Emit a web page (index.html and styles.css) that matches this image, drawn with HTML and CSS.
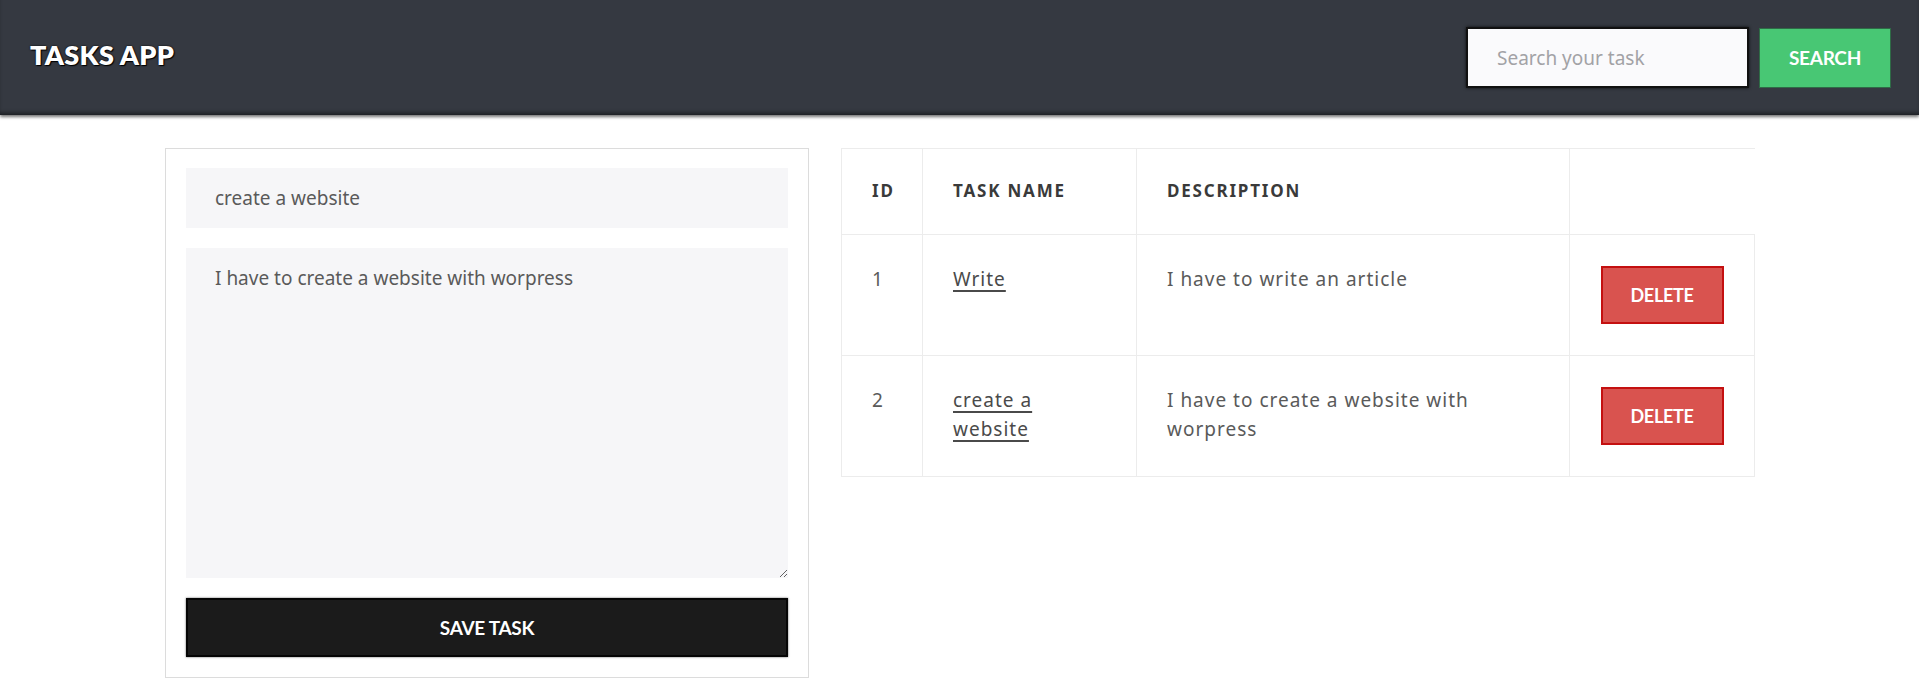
FILE: index.html
```html
<!DOCTYPE html>
<html lang="en">
<head>
<meta charset="utf-8">
<title>Tasks App</title>
<link rel="stylesheet" href="styles.css">
</head>
<body>
<header class="topbar">
  <h1 class="brand">TASKS APP</h1>
  <form class="search">
    <input class="search-input" type="text" placeholder="Search your task">
    <button class="search-btn" type="button">SEARCH</button>
  </form>
</header>
<main class="main">
  <form class="card">
    <input class="field" type="text" value="create a website">
    <textarea class="field area">I have to create a website with worpress</textarea>
    <button class="save-btn" type="button">SAVE TASK</button>
  </form>
  <table class="tasks">
    <colgroup>
      <col class="c-id"><col class="c-name"><col class="c-desc"><col class="c-act">
    </colgroup>
    <thead>
      <tr><th>ID</th><th>TASK NAME</th><th>DESCRIPTION</th><th></th></tr>
    </thead>
    <tbody>
      <tr>
        <td>1</td>
        <td class="name"><a href="#">Write</a></td>
        <td>I have to write an article</td>
        <td class="act"><button class="del-btn" type="button">DELETE</button></td>
      </tr>
      <tr>
        <td>2</td>
        <td class="name"><a href="#">create a website</a></td>
        <td>I have to create a website with worpress</td>
        <td class="act"><button class="del-btn" type="button">DELETE</button></td>
      </tr>
    </tbody>
  </table>
</main>
</body>
</html>
```
FILE: styles.css
```css
* { box-sizing: border-box; }
body {
  margin: 0;
  background: #fff;
  font-family: "Noto Sans", Lato, sans-serif;
  color: #555;
}
.topbar {
  height: 115px;
  background: #353941;
  display: flex;
  align-items: center;
  justify-content: space-between;
  padding: 0 28px 0 30px;
  box-shadow: 0 2px 3px rgba(0,0,0,0.55), inset 0 -4px 4px -2px rgba(0,0,0,0.5);
}
.brand {
  margin: 0 0 6px;
  font-family: Lato, "Noto Sans", sans-serif;
  font-weight: 800;
  font-size: 27px;
  color: #fff;
  letter-spacing: 0.3px;
  text-shadow: 0 0 2px #000, 1px 1px 1px #000;
}
.search {
  display: flex;
  gap: 10px;
  align-items: center;
}
.search-input {
  width: 283px;
  height: 61px;
  border: 2px solid #111;
  background: #fafafc;
  padding: 0 29px;
  font-family: "Noto Sans", Lato, sans-serif;
  font-size: 19px;
  color: #555;
  outline: none;
  box-shadow: 0 0 3px rgba(0,0,0,0.8);
}
.search-input::placeholder { color: #a2a2a6; }
.search-btn {
  width: 132px;
  height: 60px;
  border: 1px solid #2f6b46;
  background: #48c774;
  color: #fff;
  font-family: Lato, "Noto Sans", sans-serif;
  font-weight: 700;
  font-size: 19px;
  letter-spacing: -0.3px;
  cursor: pointer;
}
.main {
  display: flex;
  align-items: flex-start;
  gap: 32px;
  padding: 33px 0 0 165px;
}
.card {
  width: 644px;
  border: 1px solid #dcdcdc;
  padding: 19px 20px 20px;
  display: flex;
  flex-direction: column;
  gap: 20px;
  margin: 0;
}
.field {
  width: 100%;
  border: none;
  background: #f6f6f8;
  font-family: "Noto Sans", Lato, sans-serif;
  font-size: 19px;
  color: #5a5a5a;
  outline: none;
  margin: 0;
}
input.field {
  height: 60px;
  padding: 0 29px;
}
.area {
  height: 330px;
  padding: 17px 29px 16px;
  line-height: 27px;
  resize: vertical;
  display: block;
}
.save-btn {
  height: 59px;
  width: 100%;
  background: #1b1b1b;
  border: 2px solid #050505;
  color: #fff;
  font-family: Lato, "Noto Sans", sans-serif;
  font-weight: 700;
  font-size: 19px;
  letter-spacing: -0.3px;
  cursor: pointer;
  box-shadow: 0 0 2px rgba(0,0,0,0.6);
}
.tasks {
  width: 913px;
  border-collapse: collapse;
  table-layout: fixed;
  font-size: 19px;
  line-height: 29px;
  letter-spacing: 1px;
}
.c-id { width: 81px; }
.c-name { width: 214px; }
.c-desc { width: 433px; }
.c-act { width: 185px; }
.tasks th, .tasks td {
  border: 1px solid #ececec;
  text-align: left;
  vertical-align: top;
}
.tasks th {
  padding: 27px 30px 29px;
  font-weight: 700;
  font-size: 17px;
  letter-spacing: 1.8px;
  color: #3a3a3a;
}
.tasks th:last-child { border-right: none; }
.tasks td {
  padding: 30px 30px 31px;
  color: #5a5a5a;
}
.tasks td.name { padding-right: 44px; }
.tasks td a {
  color: #4a4a4a;
  text-decoration: underline;
  text-underline-offset: 4px;
  text-decoration-thickness: 1.5px;
}
.tasks td.act {
  text-align: center;
  vertical-align: middle;
  padding: 31px 0;
}
.del-btn {
  width: 123px;
  height: 58px;
  display: block;
  margin: 0 auto;
  background: #d9534f;
  border: 2px solid #c41010;
  color: #fff;
  font-family: Lato, "Noto Sans", sans-serif;
  font-weight: 700;
  font-size: 18px;
  letter-spacing: -0.3px;
  cursor: pointer;
}
```
